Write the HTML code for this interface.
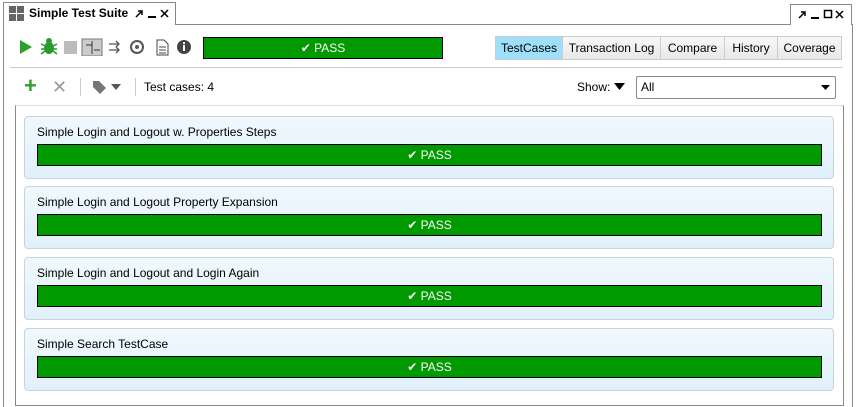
<!DOCTYPE html>
<html><head><style>
*{margin:0;padding:0;box-sizing:border-box}
body{width:856px;height:407px;background:#fff;font-family:"Liberation Sans",sans-serif;font-size:12px;color:#000;position:relative;overflow:hidden}
.a{position:absolute}
.bar{position:absolute;background:#009900;border:1px solid #000;color:#fff;text-align:center;font-size:12px}
.card{position:absolute;left:24px;width:810px;height:63px;border:1px solid #c8d4dc;border-radius:4px;background:linear-gradient(#f0f8fd,#e0f0fa)}
.card .t{position:absolute;left:12px;top:8px;font-size:12px}
.card .bar{left:12px;top:27px;width:785px;height:22px;line-height:20px}
.tab{position:absolute;top:36px;height:24px;line-height:22px;border:1px solid #ccc;background:linear-gradient(#f8f8f8,#e8e8e8);text-align:center;font-size:12px}
</style></head><body>
<div class="a" style="left:3px;top:2px;width:173px;height:23px;border:1px solid #888;border-bottom:none;background:#fff"></div>
<div class="a" style="left:176px;top:24px;width:614px;height:1px;background:#888"></div>
<div class="a" style="left:790px;top:4px;width:62px;height:21px;border:1px solid #888;border-bottom:none"></div>
<div class="a" style="left:3px;top:24px;width:1px;height:383px;background:#888"></div>
<div class="a" style="left:852px;top:24px;width:1px;height:383px;background:#888"></div>
<svg class="a" style="left:9px;top:6px" width="16" height="16"><rect x="0" y="0" width="7" height="7" fill="#666"/><rect x="8" y="0" width="7" height="7" fill="#666"/><rect x="0" y="8" width="7" height="7" fill="#666"/><rect x="8" y="8" width="7" height="7" fill="#666"/></svg>
<div class="a" style="left:29px;top:6px;font-weight:bold;font-size:12px">Simple Test Suite</div>
<svg class="a" style="left:135px;top:8px" width="40" height="12"><path d="M1 9l5-5M3 3h4v4" stroke="#000" fill="none" stroke-width="1.5"/><rect x="13" y="8" width="8" height="2"/><path d="M26 2l7 7M33 2l-7 7" stroke="#000" stroke-width="1.5"/></svg>
<svg class="a" style="left:798px;top:9px" width="52" height="12"><path d="M1 9l5-5M3 3h4v4" stroke="#000" fill="none" stroke-width="1.5"/><rect x="13" y="8" width="8" height="2"/><rect x="26.5" y="1.5" width="7" height="7" fill="none" stroke="#000" stroke-width="1.5"/><path d="M38 2l7 7M45 2l-7 7" stroke="#000" stroke-width="1.5"/></svg>
<svg class="a" style="left:18px;top:38px" width="180" height="18">
<polygon points="2,2 14,9 2,16" fill="#2ca02c"/>
<g fill="#2a9a2a"><ellipse cx="31" cy="10" rx="5" ry="6"/><circle cx="31" cy="3" r="3"/><path d="M23 6l4 2M23 11h4M23 16l4-3M39 6l-4 2M39 11h-4M39 16l-4-3" stroke="#2a9a2a" stroke-width="1.5"/></g>
<rect x="46" y="3" width="13" height="13" fill="#bbb"/>
<rect x="64" y="1" width="20" height="17" fill="#ccc" stroke="#777"/>
<path d="M74 3v13M68 7h6M76 12h6" stroke="#333" stroke-width="1"/>
<path d="M91 6h10M91 12h10M98 3l3 3-3 3M98 9l3 3-3 3" stroke="#555" fill="none" stroke-width="1.3"/>
<circle cx="119" cy="9" r="6" fill="none" stroke="#555" stroke-width="2"/><circle cx="119" cy="9" r="2" fill="#555"/>
<path d="M139 2h7l4 4v11h-11z" fill="#fff" stroke="#444"/><path d="M141 9h7M141 12h7M141 15h7" stroke="#444"/>
<circle cx="166" cy="9" r="7" fill="#444"/><rect x="165" y="7" width="2" height="6" fill="#fff"/><rect x="165" y="4" width="2" height="2" fill="#fff"/>
</svg>
<div class="bar" style="left:203px;top:37px;width:240px;height:22px;line-height:20px">✔ PASS</div>
<div class="tab" style="left:495px;width:68px;background:#9ee0fb">TestCases</div>
<div class="tab" style="left:562px;width:99px">Transaction Log</div>
<div class="tab" style="left:660px;width:65px">Compare</div>
<div class="tab" style="left:724px;width:54px">History</div>
<div class="tab" style="left:777px;width:65px">Coverage</div>
<div class="a" style="left:10px;top:67px;width:833px;height:1px;background:#ccc"></div>
<div class="a" style="left:24px;top:74px;font-size:22px;font-weight:bold;color:#2ca02c;line-height:24px">+</div>
<div class="a" style="left:52px;top:76px;font-size:18px;color:#999;line-height:22px">✕</div>
<div class="a" style="left:80px;top:78px;width:1px;height:18px;background:#ccc"></div>
<svg class="a" style="left:92px;top:80px" width="32" height="14"><path d="M1 1h6l7 7-6 6-7-7z" fill="#777"/><polygon points="19,4 29,4 24,10" fill="#555"/></svg>
<div class="a" style="left:135px;top:78px;width:1px;height:18px;background:#ccc"></div>
<div class="a" style="left:144px;top:80px">Test cases: 4</div>
<div class="a" style="left:577px;top:80px">Show:</div>
<svg class="a" style="left:614px;top:83px" width="12" height="8"><polygon points="0,0 11,0 5.5,7" fill="#000"/></svg>
<div class="a" style="left:636px;top:76px;width:200px;height:23px;border:1px solid #888;border-radius:2px;background:#fff;padding:3px 4px">All<svg style="position:absolute;right:5px;top:8px" width="9" height="6"><polygon points="0,0 9,0 4.5,5" fill="#000"/></svg></div>
<div class="a" style="left:15px;top:105px;width:829px;height:301px;border:1px solid #888;border-top:1px solid #ddd"></div>
<div class="card" style="top:116px"><div class="t">Simple Login and Logout w. Properties Steps</div><div class="bar">✔ PASS</div></div>
<div class="card" style="top:186px"><div class="t">Simple Login and Logout Property Expansion</div><div class="bar">✔ PASS</div></div>
<div class="card" style="top:257px"><div class="t">Simple Login and Logout and Login Again</div><div class="bar">✔ PASS</div></div>
<div class="card" style="top:328px"><div class="t">Simple Search TestCase</div><div class="bar">✔ PASS</div></div>
</body></html>
